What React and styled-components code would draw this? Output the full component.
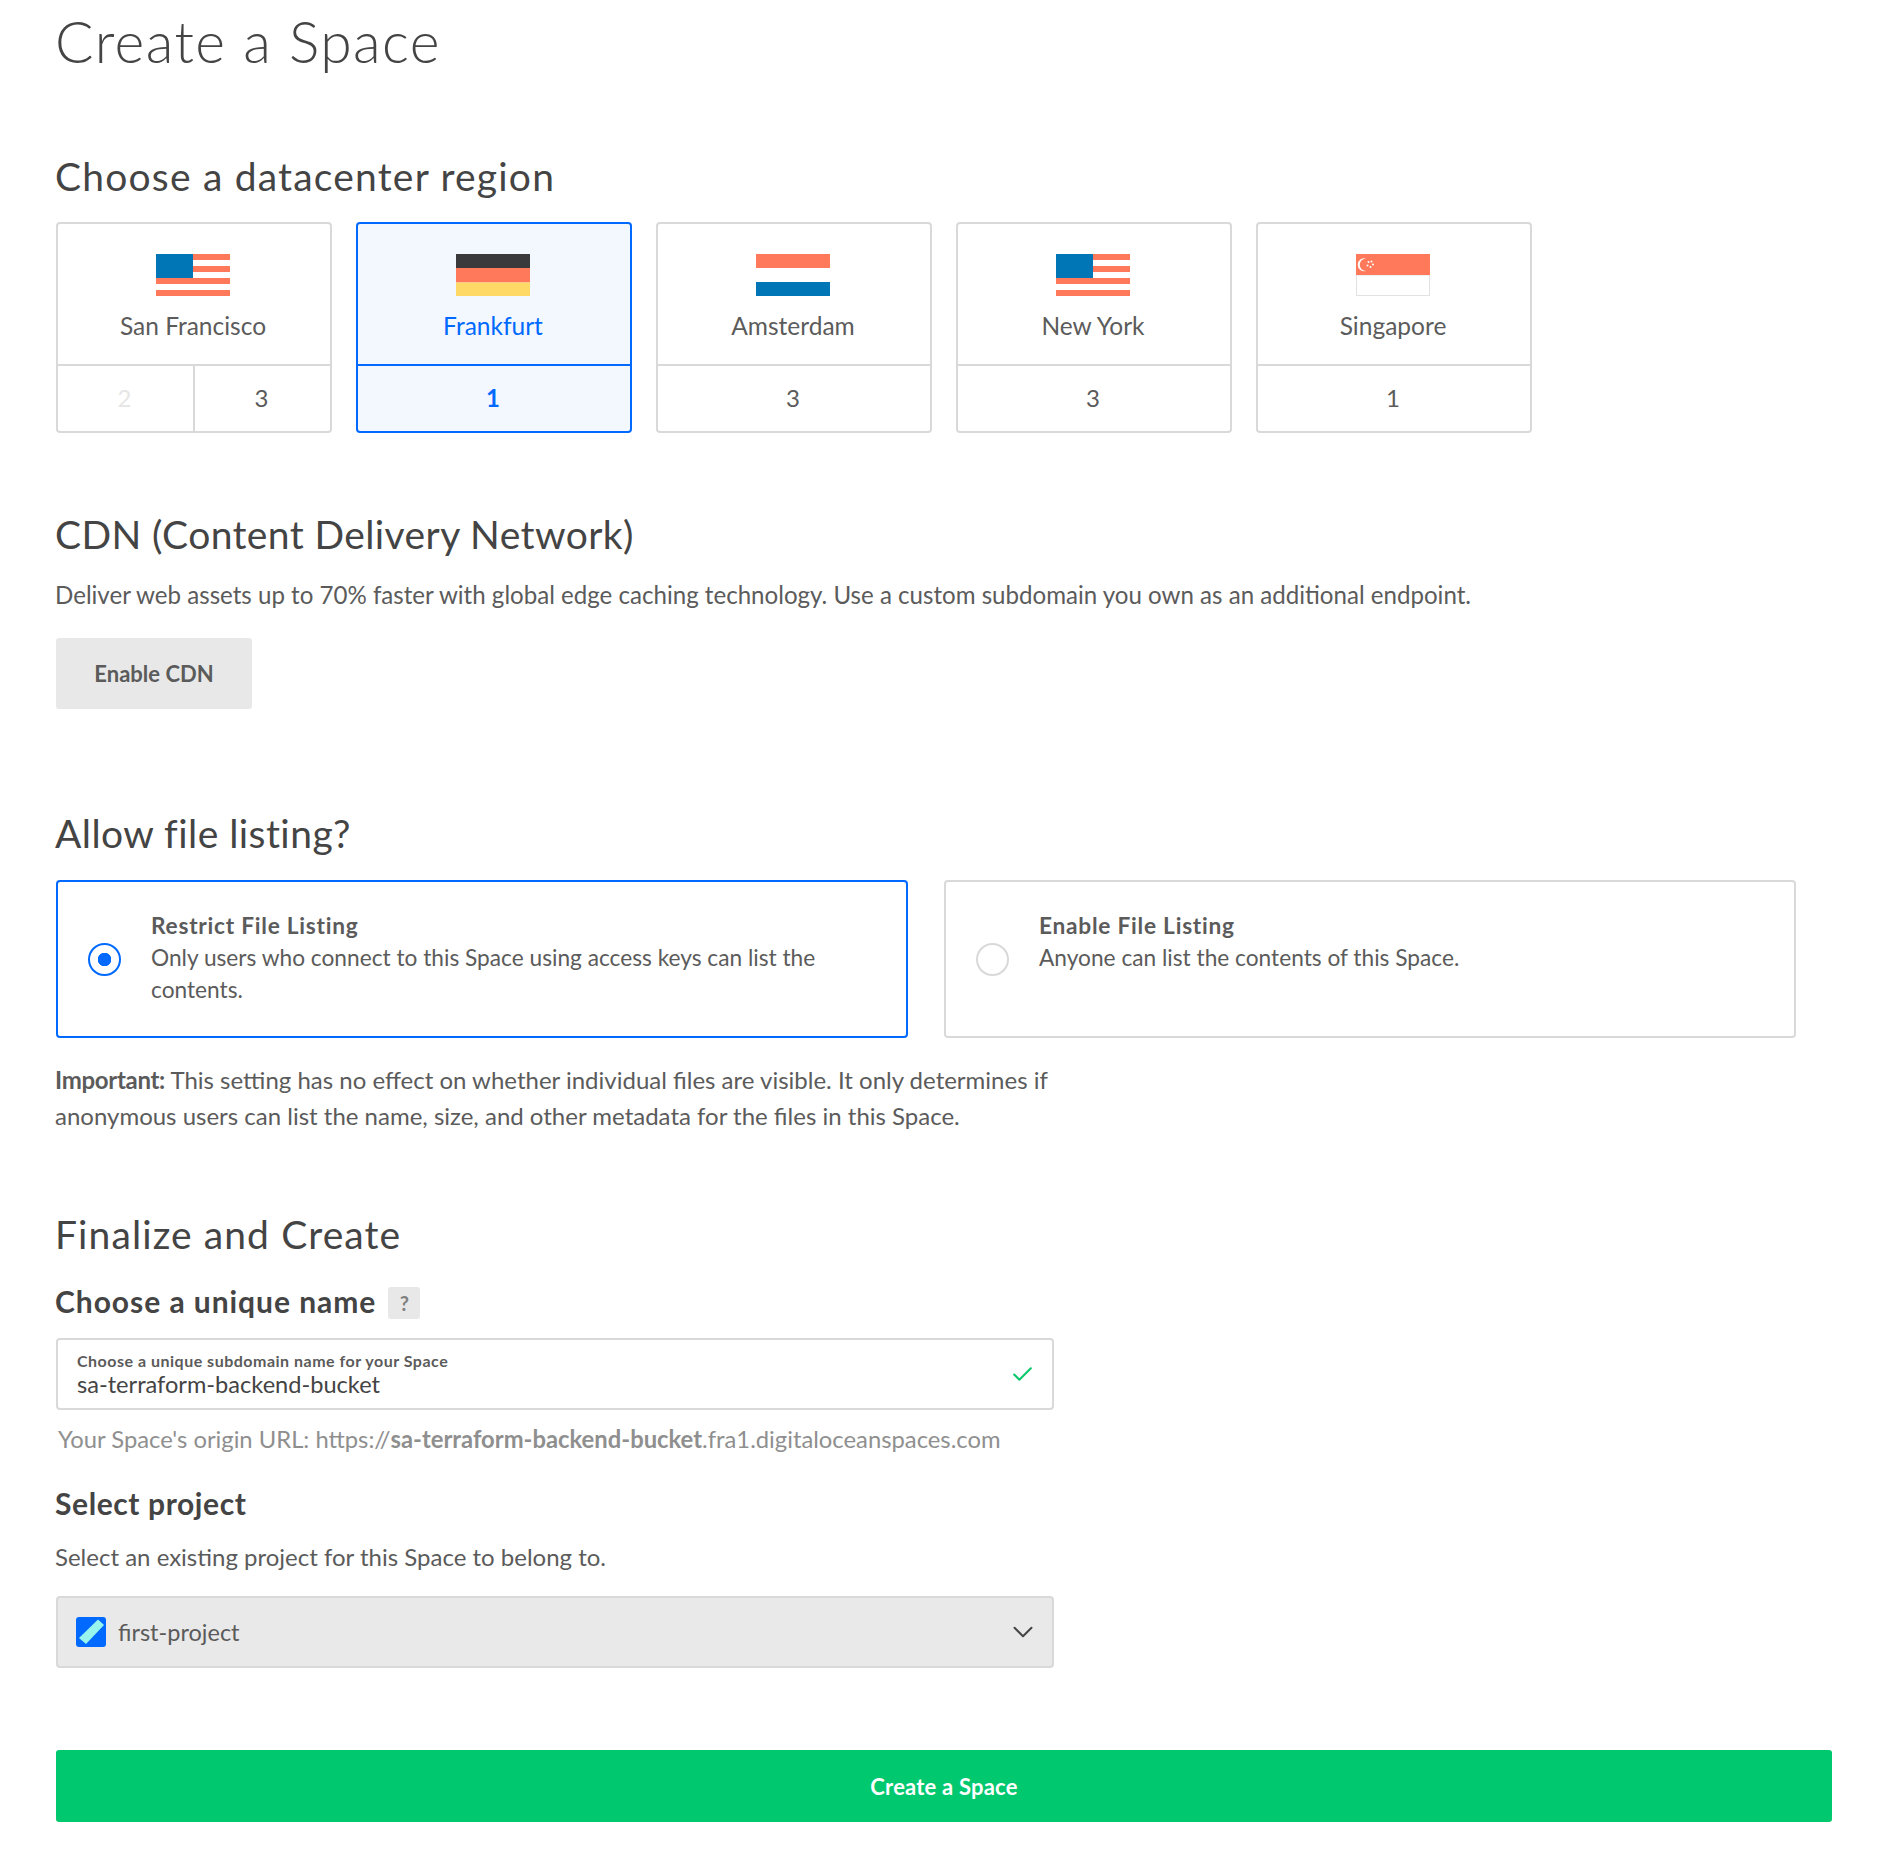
import React from 'react';
import styled, { createGlobalStyle } from 'styled-components';
import { FiChevronDown, FiCheck } from 'react-icons/fi';

const regions = [
  { name: 'San Francisco', flag: 'us', slots: [{ n: 2, off: true }, { n: 3 }] },
  { name: 'Frankfurt', flag: 'de', slots: [{ n: 1 }], active: true },
  { name: 'Amsterdam', flag: 'nl', slots: [{ n: 3 }] },
  { name: 'New York', flag: 'us', slots: [{ n: 3 }] },
  { name: 'Singapore', flag: 'sg', slots: [{ n: 1 }] },
];

const CORAL = '#ff795a';
const BLUE = '#0076b6';

function Flag({ kind }) {
  return (
    <FlagSvg width="74" height="42" viewBox="0 0 74 42">
      {kind === 'us' && (
        <>
          {[0, 12, 24, 36].map((y) => <rect key={y} x="0" y={y} width="74" height="6" fill={CORAL} />)}
          <rect x="0" y="0" width="37" height="24" fill={BLUE} />
        </>
      )}
      {kind === 'de' && (
        <>
          <rect width="74" height="14" fill="#3a3a3c" />
          <rect y="14" width="74" height="14.5" fill={CORAL} />
          <rect y="28.5" width="74" height="13.5" fill="#ffd966" />
        </>
      )}
      {kind === 'nl' && (
        <>
          <rect width="74" height="14" fill={CORAL} />
          <rect y="28" width="74" height="14" fill={BLUE} />
        </>
      )}
      {kind === 'sg' && (
        <>
          <rect x="0.5" y="21" width="73" height="20.5" fill="#fff" stroke="#e2e2e2" />
          <rect width="74" height="21" fill={CORAL} />
          <path d="M10 4.5a6.5 6.5 0 1 0 0 12.5a5.6 5.6 0 1 1 0-12.5z" fill="#fff" />
          {[[12.5, 8], [15.5, 7.5], [17, 10.5], [14.5, 13], [11.5, 11.5]].map(([x, y]) => (
            <circle key={x} cx={x} cy={y} r="1" fill="#fff" />
          ))}
        </>
      )}
    </FlagSvg>
  );
}

export default function App() {
  return (
    <>
      <GlobalStyle />
      <Page>
        <PageTitle>Create a Space</PageTitle>

        <RegionHeading>Choose a datacenter region</RegionHeading>
        <RegionRow>
          {regions.map((r) => (
            <RegionCard key={r.name} $active={r.active}>
              <RegionTop $active={r.active}>
                <Flag kind={r.flag} />
                <RegionName>{r.name}</RegionName>
              </RegionTop>
              <SlotRow>
                {r.slots.map((s) => (
                  <Slot key={s.n} $off={s.off} $active={r.active}>{s.n}</Slot>
                ))}
              </SlotRow>
            </RegionCard>
          ))}
        </RegionRow>

        <CdnHeading>CDN (Content Delivery Network)</CdnHeading>
        <BodyText>
          Deliver web assets up to 70% faster with global edge caching technology. Use a custom subdomain you own as an additional endpoint.
        </BodyText>
        <GreyButton>Enable CDN</GreyButton>

        <ListingHeading>Allow file listing?</ListingHeading>
        <ChoiceRow>
          <ChoiceCard $active>
            <Radio $active />
            <ChoiceText>
              <ChoiceTitle>Restrict File Listing</ChoiceTitle>
              <ChoiceDesc>Only users who connect to this Space using access keys can list the contents.</ChoiceDesc>
            </ChoiceText>
          </ChoiceCard>
          <ChoiceCard>
            <Radio />
            <ChoiceText>
              <ChoiceTitle>Enable File Listing</ChoiceTitle>
              <ChoiceDesc>Anyone can list the contents of this Space.</ChoiceDesc>
            </ChoiceText>
          </ChoiceCard>
        </ChoiceRow>
        <Important>
          <strong>Important:</strong> This setting has no effect on whether individual files are visible. It only determines if anonymous users can list the name, size, and other metadata for the files in this Space.
        </Important>

        <FinalHeading>Finalize and Create</FinalHeading>
        <SubHeadingRow>
          <SubHeading>Choose a unique name</SubHeading>
          <HelpBadge>?</HelpBadge>
        </SubHeadingRow>
        <NameField>
          <div>
            <FieldLabel>Choose a unique subdomain name for your Space</FieldLabel>
            <FieldValue>sa-terraform-backend-bucket</FieldValue>
          </div>
          <FiCheck size={25} color="#0ac76b" strokeWidth={2} />
        </NameField>
        <OriginText>
          Your Space's origin URL: https://<strong>sa-terraform-backend-bucket</strong>.fra1.digitaloceanspaces.com
        </OriginText>
        <ProjectHeading>Select project</ProjectHeading>
        <ProjectHint>Select an existing project for this Space to belong to.</ProjectHint>
        <SelectBox>
          <ProjectIcon width="30" height="30" viewBox="0 0 30 30">
            <rect width="30" height="30" rx="3" fill="#0069ff" />
            <path d="M22 2.5L28 8 10 27 3 21z" fill="#98f5ee" />
          </ProjectIcon>
          <SelectValue>first-project</SelectValue>
          <FiChevronDown size={34} color="#444" strokeWidth={1.4} />
        </SelectBox>

        <SubmitButton>Create a Space</SubmitButton>
      </Page>
    </>
  );
}

const GlobalStyle = createGlobalStyle`
  html, body { margin: 0; background: #fff; }
  body {
    font-family: "Lato", "Open Sans", sans-serif;
    color: #5b5b5b;
  }
`;

const Page = styled.div`
  width: 1884px;
  height: 1858px;
  box-sizing: border-box;
  padding: 0 52px 0 56px;
  overflow: hidden;
`;

const PageTitle = styled.h1`
  margin: 9px 0 0 -1px;
  height: 64px;
  line-height: 64px;
  font-size: 57px;
  font-weight: 300;
  letter-spacing: 1.4px;
  color: #444;
`;

const Heading = styled.h2`
  margin: 0 0 0 -1px;
  height: 46px;
  line-height: 46px;
  font-size: 39px;
  font-weight: 400;
  letter-spacing: 1.1px;
  color: #444;
`;

const RegionHeading = styled(Heading)`
  margin-top: 80px;
  letter-spacing: 1.2px;
`;

const RegionRow = styled.div`
  display: flex;
  gap: 24px;
  margin-top: 23px;
`;

const RegionCard = styled.div`
  width: 276px;
  height: 211px;
  box-sizing: border-box;
  display: flex;
  flex-direction: column;
  border: 2px solid ${({ $active }) => ($active ? '#0069ff' : '#d9d9d9')};
  border-radius: 4px;
  background: ${({ $active }) => ($active ? '#f3f8ff' : '#fff')};
  color: ${({ $active }) => ($active ? '#0069ff' : '#5b5b5b')};
`;

const RegionTop = styled.div`
  height: 142px;
  box-sizing: border-box;
  display: flex;
  flex-direction: column;
  align-items: center;
  padding: 30px 2px 0 0;
  border-bottom: 2px solid ${({ $active }) => ($active ? '#0069ff' : '#d9d9d9')};
`;

const FlagSvg = styled.svg`
  flex: none;
`;

const RegionName = styled.div`
  margin-top: 14px;
  font-size: 24.5px;
  line-height: 32px;
`;

const SlotRow = styled.div`
  flex: 1;
  display: flex;
`;

const Slot = styled.div`
  flex: 1 1 0;
  box-sizing: border-box;
  display: flex;
  align-items: center;
  justify-content: center;
  padding: 0 2px 2px 0;
  font-size: 24px;
  font-weight: ${({ $active }) => ($active ? 700 : 400)};
  color: ${({ $off, $active }) => ($off ? '#e6e6e6' : $active ? '#0069ff' : '#5b5b5b')};
  &:not(:last-child) { border-right: 2px solid #d9d9d9; }
`;

const CdnHeading = styled(Heading)`
  margin-top: 78px;
  letter-spacing: 0.4px;
`;

const BodyText = styled.p`
  margin: 20px 0 0 -1px;
  font-size: 24.1px;
  line-height: 36px;
`;

const GreyButton = styled.div`
  margin-top: 25px;
  width: 196px;
  height: 71px;
  display: flex;
  align-items: center;
  justify-content: center;
  background: #e8e8e8;
  border-radius: 3px;
  font-size: 22px;
  font-weight: 700;
  color: #5b5b5b;
`;

const ListingHeading = styled(Heading)`
  margin-top: 101px;
  letter-spacing: 0.45px;
`;

const ChoiceRow = styled.div`
  display: flex;
  gap: 36px;
  margin-top: 24px;
`;

const ChoiceCard = styled.div`
  width: 852px;
  height: 158px;
  box-sizing: border-box;
  display: flex;
  align-items: center;
  padding: 0 64px 0 30px;
  border: 2px solid ${({ $active }) => ($active ? '#0069ff' : '#d9d9d9')};
  border-radius: 4px;
`;

const Radio = styled.span`
  flex: none;
  width: 33px;
  height: 33px;
  box-sizing: border-box;
  border-radius: 50%;
  border: 2px solid ${({ $active }) => ($active ? '#0069ff' : '#d9d9d9')};
  background: ${({ $active }) => ($active ? 'radial-gradient(circle, #0069ff 0 6.5px, #fff 7px)' : '#fff')};
`;

const ChoiceText = styled.div`
  align-self: flex-start;
  margin-left: 30px;
  padding-top: 28px;
  font-size: 22.7px;
  line-height: 32px;
`;

const ChoiceTitle = styled.div`
  font-weight: 700;
  letter-spacing: 0.75px;
`;

const ChoiceDesc = styled.div``;

const Important = styled.p`
  margin: 24px 0 0 -1px;
  width: 1000px;
  font-size: 24px;
  line-height: 36px;
  strong { font-weight: 700; letter-spacing: -0.3px; }
`;

const FinalHeading = styled(Heading)`
  margin-top: 77px;
`;

const SubHeadingRow = styled.div`
  display: flex;
  align-items: center;
  gap: 12px;
  margin-top: 25px;
`;

const SubHeading = styled.h3`
  margin: 0 0 0 -1px;
  font-size: 30px;
  line-height: 38px;
  font-weight: 700;
  letter-spacing: 0.95px;
  color: #444;
`;

const HelpBadge = styled.span`
  width: 32px;
  height: 32px;
  margin-top: 3px;
  display: flex;
  align-items: center;
  justify-content: center;
  border-radius: 3px;
  background: #e8e8e8;
  font-size: 20px;
  font-weight: 700;
  color: #808080;
`;

const NameField = styled.div`
  margin-top: 18px;
  width: 998px;
  height: 72px;
  box-sizing: border-box;
  display: flex;
  align-items: center;
  justify-content: space-between;
  padding: 0 17px 0 19px;
  border: 2px solid #d9d9d9;
  border-radius: 4px;
`;

const FieldLabel = styled.div`
  font-size: 16px;
  line-height: 18px;
  font-weight: 700;
  letter-spacing: 0.5px;
`;

const FieldValue = styled.div`
  margin-top: 1px;
  font-size: 23.6px;
  line-height: 26px;
  color: #444;
`;

const OriginText = styled.p`
  margin: 11px 0 0 2px;
  font-size: 23.8px;
  line-height: 36px;
  color: #8f8f8f;
  strong { font-weight: 700; }
`;

const ProjectHeading = styled.h3`
  margin: 27px 0 0 -1px;
  font-size: 30px;
  line-height: 38px;
  font-weight: 700;
  letter-spacing: 0.6px;
  color: #444;
`;

const ProjectHint = styled.p`
  margin: 17px 0 0 -1px;
  font-size: 24px;
  line-height: 36px;
`;

const SelectBox = styled.div`
  margin-top: 21px;
  width: 998px;
  height: 72px;
  box-sizing: border-box;
  display: flex;
  align-items: center;
  padding: 0 12px 0 18px;
  background: #e9e9e9;
  border: 2px solid #d9d9d9;
  border-radius: 4px;
`;

const ProjectIcon = styled.svg`
  flex: none;
`;

const SelectValue = styled.span`
  flex: 1;
  margin-left: 12px;
  font-size: 23.5px;
`;

const SubmitButton = styled.div`
  margin-top: 82px;
  height: 72px;
  width: 1776px;
  display: flex;
  align-items: center;
  justify-content: center;
  background: #00c86f;
  border-radius: 3px;
  font-size: 22px;
  font-weight: 700;
  letter-spacing: 0.2px;
  color: #fff;
`;
